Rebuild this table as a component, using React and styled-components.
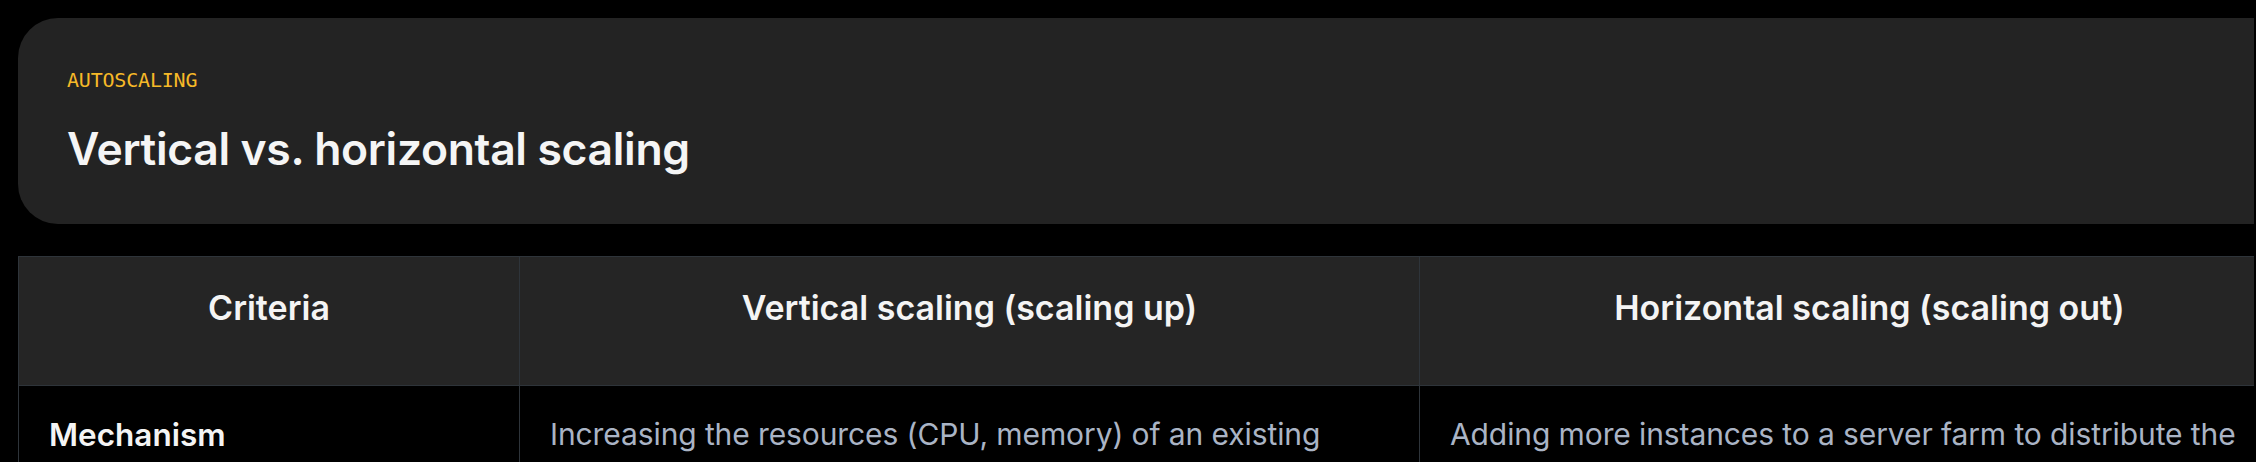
import styled, { createGlobalStyle } from "styled-components";

const GlobalStyle = createGlobalStyle`
  html, body {
    margin: 0;
    padding: 0;
    background: #000;
  }

  body {
    font-family: Inter, "Noto Sans", sans-serif;
    color: #f4f4f4;
  }
`;

const Page = styled.div`
  padding: 18px 0 0 18px;
  margin-right: 2px;
  overflow: hidden;
`;

const Content = styled.div`
  display: flex;
  flex-direction: column;
  gap: 32px;
  width: 2301px;
`;

const HeroCard = styled.section`
  display: flex;
  flex-direction: column;
  gap: 28px;
  padding: 48px 49px;
  background: #232323;
  border-radius: 40px;
`;

const Eyebrow = styled.span`
  font-family: "DejaVu Sans Mono", "Liberation Mono", monospace;
  font-size: 20px;
  line-height: 28px;
  color: #f6b928;
  letter-spacing: -0.2px;
`;

const Title = styled.h1`
  margin: 0;
  font-size: 44.5px;
  line-height: 54px;
  font-weight: 600;
  color: #f5f5f5;
  letter-spacing: -0.35px;
`;

const Table = styled.table`
  width: 100%;
  table-layout: fixed;
  border-collapse: collapse;
`;

const HeadCell = styled.th`
  height: 103px;
  padding: 25px 30px 0;
  vertical-align: top;
  background: #252525;
  border: 1px solid #2e343a;
  font-size: 34px;
  line-height: 51px;
  font-weight: 600;
  color: #f4f4f4;
  text-align: center;
`;

const Cell = styled.td`
  padding: 26px 30px;
  vertical-align: top;
  border: 1px solid #2e343a;
  font-size: ${(p) => (p.$label ? "31.5px" : "30px")};
  line-height: 45px;
  font-weight: ${(p) => (p.$label ? 600 : 400)};
  color: ${(p) => (p.$label ? "#f4f4f4" : "#aab4c5")};
  letter-spacing: ${(p) => (p.$label ? "0" : "-0.1px")};
`;

const columns = [
  { title: "Criteria", width: 501 },
  { title: "Vertical scaling (scaling up)", width: 900 },
  { title: "Horizontal scaling (scaling out)", width: 900 },
];

const rows = [
  [
    "Mechanism",
    "Increasing the resources (CPU, memory) of an existing server.",
    "Adding more instances to a server farm to distribute the load.",
  ],
];

export default function App() {
  return (
    <>
      <GlobalStyle />
      <Page>
        <Content>
          <HeroCard>
            <Eyebrow>AUTOSCALING</Eyebrow>
            <Title>Vertical vs. horizontal scaling</Title>
          </HeroCard>
          <Table>
            <colgroup>
              {columns.map((c) => (
                <col key={c.title} style={{ width: c.width }} />
              ))}
            </colgroup>
            <thead>
              <tr>
                {columns.map((c) => (
                  <HeadCell key={c.title}>{c.title}</HeadCell>
                ))}
              </tr>
            </thead>
            <tbody>
              {rows.map((row) => (
                <tr key={row[0]}>
                  {row.map((text, i) => (
                    <Cell key={i} $label={i === 0}>
                      {text}
                    </Cell>
                  ))}
                </tr>
              ))}
            </tbody>
          </Table>
        </Content>
      </Page>
    </>
  );
}
